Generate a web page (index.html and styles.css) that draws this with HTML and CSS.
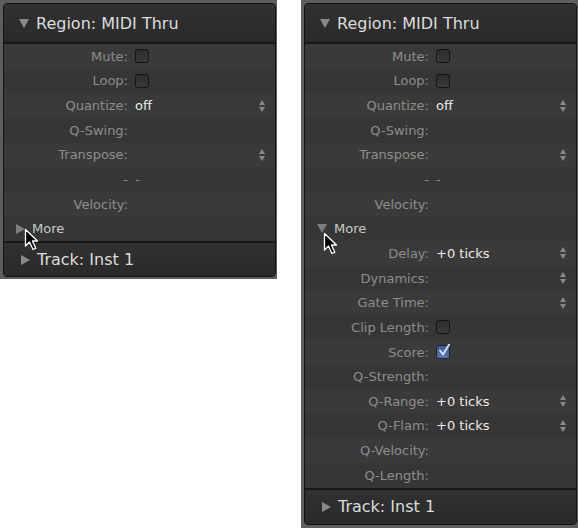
FILE: index.html
```html
<!DOCTYPE html>
<html lang="en">
<head>
    <meta charset="UTF-8">
    <title>Region Inspector</title>
    <link rel="stylesheet" href="styles.css">
</head>
<body>
    <div class="shots">
        <!-- Collapsed "More" section -->
        <div class="frame">
            <div class="panel">
                <div class="section-head">
                    <span class="tri tri-down"></span>
                    <span class="section-title">Region: MIDI Thru</span>
                </div>
                <div class="rows">
                    <div class="row"><span class="label">Mute:</span><span class="check"></span></div>
                    <div class="row"><span class="label">Loop:</span><span class="check"></span></div>
                    <div class="row"><span class="label">Quantize:</span><span class="value">off</span><span class="stepper"></span></div>
                    <div class="row"><span class="label">Q-Swing:</span></div>
                    <div class="row"><span class="label">Transpose:</span><span class="value"></span><span class="stepper"></span></div>
                    <div class="row"><span class="label">-</span><span class="value dim">-</span></div>
                    <div class="row"><span class="label">Velocity:</span></div>
                    <div class="row more"><span class="tri tri-right small"></span><span class="more-label">More</span></div>
                </div>
                <div class="section-head track">
                    <span class="tri tri-right"></span>
                    <span class="section-title">Track: Inst 1</span>
                </div>
            </div>
            <svg class="cursor cursor-left" width="15" height="23" viewBox="0 0 15 23">
                <path d="M1.5 1.5 L1.5 18 L5.5 14 L9 21.5 L11.8 20.2 L8.4 13 L13.5 13 Z" fill="#000" stroke="#fff" stroke-width="1.3" stroke-linejoin="round"/>
            </svg>
        </div>

        <!-- Expanded "More" section -->
        <div class="frame tall">
            <div class="panel">
                <div class="section-head">
                    <span class="tri tri-down"></span>
                    <span class="section-title">Region: MIDI Thru</span>
                </div>
                <div class="rows">
                    <div class="row"><span class="label">Mute:</span><span class="check"></span></div>
                    <div class="row"><span class="label">Loop:</span><span class="check"></span></div>
                    <div class="row"><span class="label">Quantize:</span><span class="value">off</span><span class="stepper"></span></div>
                    <div class="row"><span class="label">Q-Swing:</span></div>
                    <div class="row"><span class="label">Transpose:</span><span class="value"></span><span class="stepper"></span></div>
                    <div class="row"><span class="label">-</span><span class="value dim">-</span></div>
                    <div class="row"><span class="label">Velocity:</span></div>
                    <div class="row more"><span class="tri tri-down small"></span><span class="more-label">More</span></div>
                    <div class="row"><span class="label">Delay:</span><span class="value">+0 ticks</span><span class="stepper"></span></div>
                    <div class="row"><span class="label">Dynamics:</span><span class="value"></span><span class="stepper"></span></div>
                    <div class="row"><span class="label">Gate Time:</span><span class="value"></span><span class="stepper"></span></div>
                    <div class="row"><span class="label">Clip Length:</span><span class="check"></span></div>
                    <div class="row">
                        <span class="label">Score:</span>
                        <span class="check checked">
                            <svg width="14" height="14" viewBox="0 0 14 14"><path d="M3 6.5 L6 10.5 L12 0.8" fill="none" stroke="#cfe0ff" stroke-width="2" stroke-linecap="round" stroke-linejoin="round"/></svg>
                        </span>
                    </div>
                    <div class="row"><span class="label">Q-Strength:</span></div>
                    <div class="row"><span class="label">Q-Range:</span><span class="value">+0 ticks</span><span class="stepper"></span></div>
                    <div class="row"><span class="label">Q-Flam:</span><span class="value">+0 ticks</span><span class="stepper"></span></div>
                    <div class="row"><span class="label">Q-Velocity:</span></div>
                    <div class="row"><span class="label">Q-Length:</span></div>
                </div>
                <div class="section-head track">
                    <span class="tri tri-right"></span>
                    <span class="section-title">Track: Inst 1</span>
                </div>
            </div>
            <svg class="cursor cursor-right" width="15" height="23" viewBox="0 0 15 23">
                <path d="M1.5 1.5 L1.5 18 L5.5 14 L9 21.5 L11.8 20.2 L8.4 13 L13.5 13 Z" fill="#000" stroke="#fff" stroke-width="1.3" stroke-linejoin="round"/>
            </svg>
        </div>
    </div>
</body>
</html>
```

FILE: styles.css
```css
body {
    margin: 0;
    background: #fff;
    font-family: "DejaVu Sans", Verdana, sans-serif;
}
.shots {
    display: flex;
    align-items: flex-start;
    gap: 24px;
}
.frame {
    position: relative;
    width: 277px;
    background: #5e5e5e;
    padding: 3px 1px 2px 3px;
    box-sizing: border-box;
}
.frame.tall {
    padding-bottom: 3px;
}
.panel {
    border: 1px solid #121212;
    border-radius: 4px;
    overflow: hidden;
    background: #393939;
}
.section-head {
    height: 38px;
    display: flex;
    align-items: center;
    padding-left: 15px;
    background: linear-gradient(#313131, #2a2a2a);
    border-bottom: 2px solid #171717;
}
.section-head.track {
    height: 33px;
    border-bottom: none;
    border-top: 2px solid #171717;
    padding-left: 17px;
}
.tall .section-head.track {
    height: 34px;
}
.section-title {
    font-size: 16px;
    color: #dcdcdc;
    margin-left: 7px;
}
.tri {
    display: inline-block;
    width: 0;
    height: 0;
}
.tri-down {
    border-left: 5.5px solid transparent;
    border-right: 5.5px solid transparent;
    border-top: 9px solid #8a8a8a;
}
.tri-right {
    border-top: 5.5px solid transparent;
    border-bottom: 5.5px solid transparent;
    border-left: 9px solid #8a8a8a;
}
.tri-down.small {
    border-left-width: 5px;
    border-right-width: 5px;
    border-top: 9px solid #7c7c7c;
}
.tri-right.small {
    border-top-width: 5px;
    border-bottom-width: 5px;
    border-left: 9px solid #7c7c7c;
}
.row {
    height: 24.65px;
    display: flex;
    align-items: center;
    font-size: 13px;
    background: #3a3a3a;
}
.row:nth-child(even) {
    background: #363636;
}
.label {
    width: 124px;
    flex: none;
    text-align: right;
    color: #8d8d8d;
}
.value {
    flex: 1;
    margin-left: 7px;
    color: #eaeaea;
}
.value.dim {
    color: #8d8d8d;
}
.check {
    width: 12px;
    height: 12px;
    margin-left: 7px;
    border: 1px solid #141414;
    border-radius: 3px;
    background: linear-gradient(#2d2d2d, #3a3a3a);
    position: relative;
}
.check.checked {
    background: linear-gradient(#3f5b8e, #5a76a8);
    border-color: #1a2436;
}
.check svg {
    position: absolute;
    left: 0;
    top: -2px;
}
.stepper {
    width: 7px;
    height: 12px;
    margin-right: 9px;
    position: relative;
}
.stepper::before,
.stepper::after {
    content: "";
    position: absolute;
    left: 0;
    border-left: 3.5px solid transparent;
    border-right: 3.5px solid transparent;
}
.stepper::before {
    top: 0;
    border-bottom: 5px solid #888;
}
.stepper::after {
    bottom: 0;
    border-top: 5px solid #888;
}
.row.more {
    padding-left: 12px;
}
.more-label {
    margin-left: 7px;
    color: #cacaca;
}
.cursor {
    position: absolute;
}
.cursor-left {
    left: 24px;
    top: 228px;
}
.cursor-right {
    left: 22px;
    top: 232px;
}
```
